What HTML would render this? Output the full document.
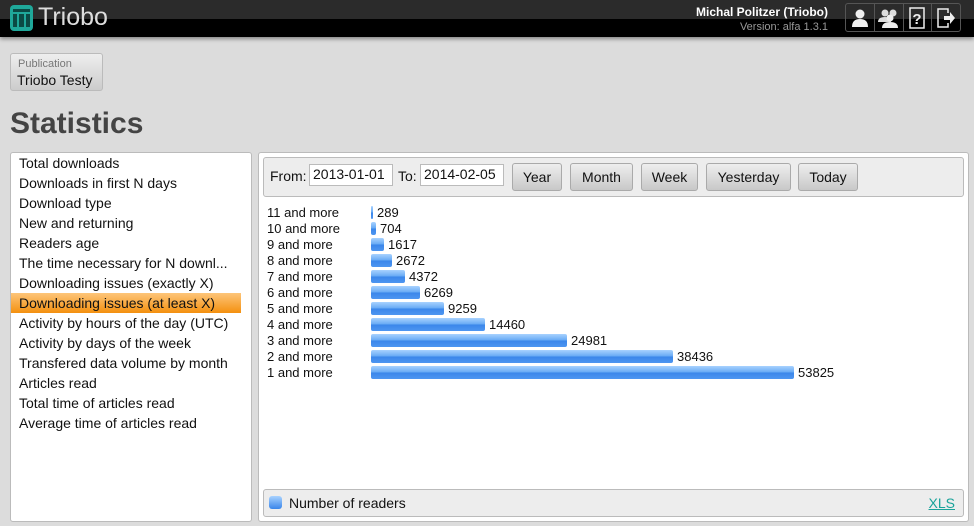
<!DOCTYPE html>
<html><head><style>
*{margin:0;padding:0;box-sizing:border-box}
body{width:974px;height:526px;background:#dcdcdc;font-family:"Liberation Sans","DejaVu Sans",sans-serif;position:relative;overflow:hidden;color:#111}
.hdr{position:absolute;left:0;top:0;width:974px;height:37px;background:linear-gradient(#2b2b2b 0,#2b2b2b 19px,#000 19px,#000 37px);box-shadow:0 2px 4px rgba(0,0,0,.4)}
.logo{position:absolute;left:10px;top:5px;width:23px;height:26px;border-radius:4px;background:#1fa89a}
.logo i{position:absolute;background:#0b4a44}
.ltxt{position:absolute;left:38px;top:3px;font-size:25px;color:#ddd;font-weight:300}
.user{position:absolute;right:146px;top:5px;color:#fff;font-size:12px;font-weight:bold;text-align:right}
.ver{position:absolute;right:146px;top:21px;color:#999;font-size:11px}
.icons{position:absolute;left:845px;top:3px;width:116px;height:29px;border:1px solid #555;border-radius:3px;display:flex}
.icons div{flex:1;border-right:1px solid #555;display:flex;align-items:center;justify-content:center}
.icons div:last-child{border:none}
.pub{position:absolute;left:10px;top:53px;width:93px;height:38px;border:1px solid #bbb;border-radius:3px;background:linear-gradient(#eee,#ccc)}
.pub .a{position:absolute;left:7px;top:4px;font-size:11px;color:#777}
.pub .b{position:absolute;left:6px;top:18px;font-size:14px}
h1{position:absolute;left:10px;top:107px;font-size:30px;color:#444;font-weight:bold}
.list{position:absolute;left:10px;top:152px;width:242px;height:370px;background:#fff;border:1px solid #bbb;border-radius:3px}
.list div{position:absolute;left:0;width:230px;height:20px;padding-left:8px;font-size:14px;line-height:20px;white-space:nowrap}
.list .sel{background:linear-gradient(#fdc57a,#f4900f)}
.main{position:absolute;left:258px;top:152px;width:711px;height:370px;background:#fff;border:1px solid #bbb;border-radius:3px}
.tb{position:absolute;left:4px;top:4px;width:701px;height:40px;background:#ededed;border:1px solid #bbb;border-radius:3px;font-size:14px}
.tb span{position:absolute;top:10px}
.inp{position:absolute;top:6px;height:22px;border:1px solid #bbb;background:#fff;padding:1px 3px;font-size:14px}
.btn{position:absolute;top:5px;height:28px;border:1px solid #aaa;border-radius:3px;background:linear-gradient(#eee,#c8c8c8);font-size:14px;line-height:27px;text-align:center}
.row{position:absolute;left:8px;font-size:13px;height:16px;line-height:16px}
.bar{position:absolute;left:104px;top:1px;height:13px;border-radius:2px;background:linear-gradient(#a8d2ff 0,#64a8f4 50%,#3a86ea 51%,#4e96f0)}
.val{position:absolute;top:0}
.leg{position:absolute;left:4px;top:336px;width:701px;height:28px;background:#ededed;border:1px solid #bbb;border-radius:3px;font-size:14px}
</style></head><body>
<div class="hdr">
<div class="logo"><i style="left:3px;top:4px;width:17px;height:3px"></i><i style="left:3px;top:9px;width:4px;height:13px"></i><i style="left:9px;top:9px;width:5px;height:13px"></i><i style="left:16px;top:9px;width:4px;height:13px"></i></div>
<div class="ltxt">Triobo</div>
<div class="user">Michal Politzer (Triobo)</div>
<div class="ver">Version: alfa 1.3.1</div>
<div class="icons">
<div><svg width="18" height="20"><circle cx="9" cy="6" r="4.5" fill="#eee"/><path d="M1 19 Q1 11 9 11 Q17 11 17 19Z" fill="#eee"/></svg></div>
<div><svg width="24" height="20"><circle cx="8" cy="5" r="3.5" fill="#ddd"/><circle cx="16" cy="5" r="3.5" fill="#ddd"/><path d="M1 14 Q1 9 8 9 Q14 9 14 14Z" fill="#ddd"/><circle cx="13" cy="10" r="3.5" fill="#eee"/><path d="M5 20 Q5 14 13 14 Q21 14 21 20Z" fill="#eee"/></svg></div>
<div><svg width="16" height="22"><rect x="1" y="1" width="14" height="20" fill="none" stroke="#eee" stroke-width="1.5"/><text x="8" y="17" font-size="15" font-weight="bold" fill="#eee" text-anchor="middle" font-family="Liberation Sans">?</text></svg></div>
<div><svg width="20" height="22"><path d="M12 6V2H2v18h10v-4" fill="none" stroke="#eee" stroke-width="1.5"/><path d="M8 9h6V5l5 6-5 6v-4H8z" fill="#eee"/></svg></div>
</div>
</div>
<div class="pub"><div class="a">Publication</div><div class="b">Triobo Testy</div></div>
<h1>Statistics</h1>
<div class="list">
<div style="top:0">Total downloads</div>
<div style="top:20px">Downloads in first N days</div>
<div style="top:40px">Download type</div>
<div style="top:60px">New and returning</div>
<div style="top:80px">Readers age</div>
<div style="top:100px">The time necessary for N downl...</div>
<div style="top:120px">Downloading issues (exactly X)</div>
<div class="sel" style="top:140px">Downloading issues (at least X)</div>
<div style="top:160px">Activity by hours of the day (UTC)</div>
<div style="top:180px">Activity by days of the week</div>
<div style="top:200px">Transfered data volume by month</div>
<div style="top:220px">Articles read</div>
<div style="top:240px">Total time of articles read</div>
<div style="top:260px">Average time of articles read</div>
</div>
<div class="main">
<div class="tb">
<span style="left:6px">From:</span><div class="inp" style="left:45px;width:84px">2013-01-01</div>
<span style="left:134px">To:</span><div class="inp" style="left:156px;width:84px">2014-02-05</div>
<div class="btn" style="left:248px;width:50px">Year</div>
<div class="btn" style="left:306px;width:63px">Month</div>
<div class="btn" style="left:377px;width:57px">Week</div>
<div class="btn" style="left:442px;width:85px">Yesterday</div>
<div class="btn" style="left:534px;width:60px">Today</div>
</div>
<div class="row" style="top:52px">11 and more<div class="bar" style="width:2px"></div><span class="val" style="left:110px">289</span></div>
<div class="row" style="top:68px">10 and more<div class="bar" style="width:5px"></div><span class="val" style="left:113px">704</span></div>
<div class="row" style="top:84px">9 and more<div class="bar" style="width:13px"></div><span class="val" style="left:121px">1617</span></div>
<div class="row" style="top:100px">8 and more<div class="bar" style="width:21px"></div><span class="val" style="left:129px">2672</span></div>
<div class="row" style="top:116px">7 and more<div class="bar" style="width:34px"></div><span class="val" style="left:142px">4372</span></div>
<div class="row" style="top:132px">6 and more<div class="bar" style="width:49px"></div><span class="val" style="left:157px">6269</span></div>
<div class="row" style="top:148px">5 and more<div class="bar" style="width:73px"></div><span class="val" style="left:181px">9259</span></div>
<div class="row" style="top:164px">4 and more<div class="bar" style="width:114px"></div><span class="val" style="left:222px">14460</span></div>
<div class="row" style="top:180px">3 and more<div class="bar" style="width:196px"></div><span class="val" style="left:304px">24981</span></div>
<div class="row" style="top:196px">2 and more<div class="bar" style="width:302px"></div><span class="val" style="left:410px">38436</span></div>
<div class="row" style="top:212px">1 and more<div class="bar" style="width:423px"></div><span class="val" style="left:531px">53825</span></div>
<div class="leg"><div style="position:absolute;left:5px;top:6px;width:13px;height:13px;border-radius:3px;background:linear-gradient(#a8d2ff,#3a86ea)"></div><span style="position:absolute;left:25px;top:5px">Number of readers</span><span style="position:absolute;right:8px;top:5px;color:#1aa39a;text-decoration:underline">XLS</span></div>
</div>
</body></html>
